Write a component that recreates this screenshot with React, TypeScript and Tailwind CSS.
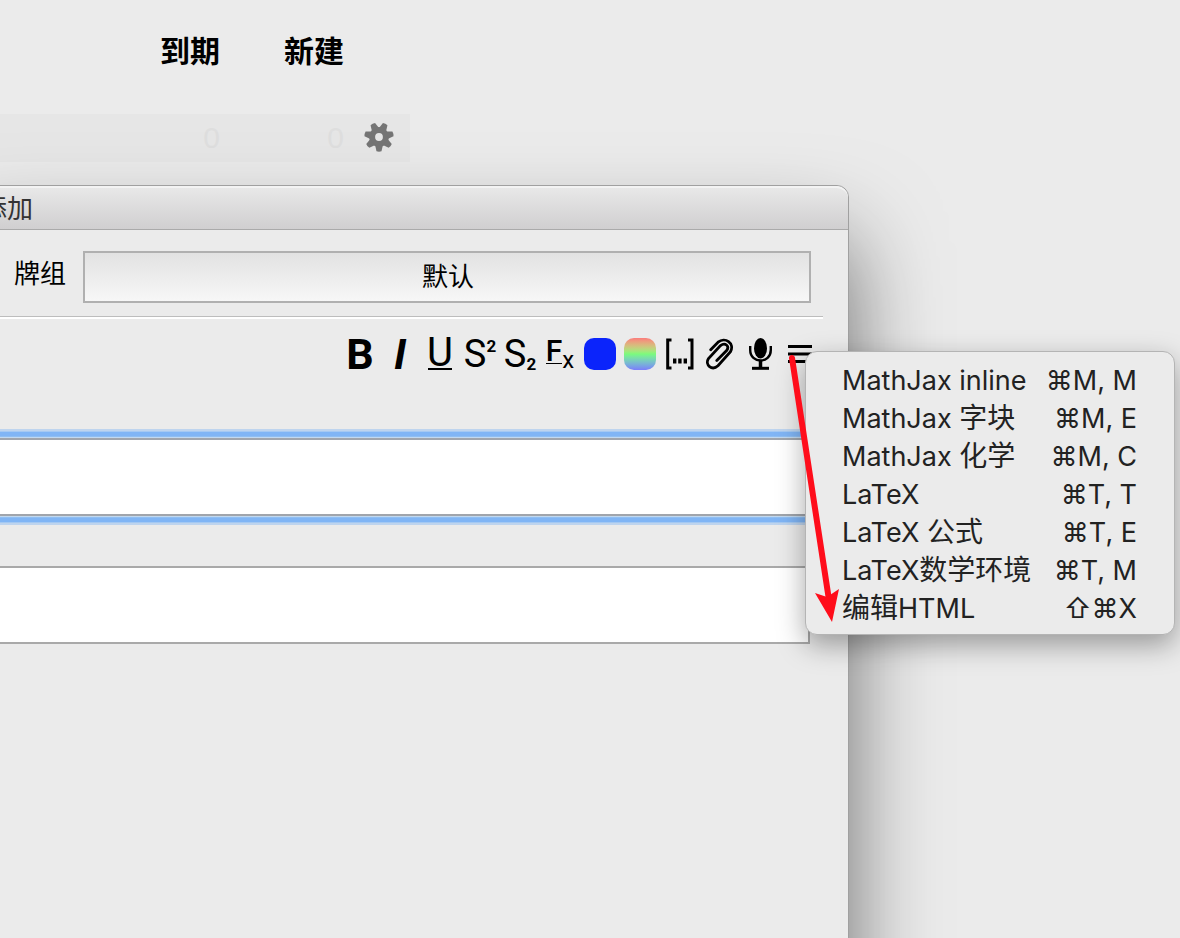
import type { ReactNode } from "react";

const uiFont = "font-['Inter','Noto_Sans_CJK_SC',sans-serif]";
const glyphFont = "font-['Roboto','Liberation_Sans',sans-serif]";

const menuItems = [
  { label: "MathJax inline", keys: "⌘M, M" },
  { label: "MathJax 字块", keys: "⌘M, E" },
  { label: "MathJax 化学", keys: "⌘M, C" },
  { label: "LaTeX", keys: "⌘T, T" },
  { label: "LaTeX 公式", keys: "⌘T, E" },
  { label: "LaTeX数学环境", keys: "⌘T, M" },
  { label: "编辑HTML", keys: "⇧⌘X" },
];

const teeth = [0, 1, 2, 3, 4, 5, 6];

function GearIcon() {
  return (
    <svg width="30" height="30" viewBox="-15 -15 30 30" fill="#757575">
      <circle r="6.9" fill="none" stroke="#757575" strokeWidth="6" />
      {teeth.map((n) => (
        <path key={n} d="M-3.9 8L-2.5 14.3Q0 15.2 2.5 14.3L3.9 8Z" transform={`rotate(${(n * 360) / 7})`} />
      ))}
    </svg>
  );
}

function ToolButton({ title, children }: { title: string; children: ReactNode }) {
  return (
    <button type="button" aria-label={title} className="flex h-10 w-10 shrink-0 items-center justify-center">
      {children}
    </button>
  );
}

function Toolbar() {
  return (
    <div className={`flex justify-end text-black ${glyphFont}`}>
      <ToolButton title="Bold">
        <span className="text-[43px] leading-10 font-bold">B</span>
      </ToolButton>
      <ToolButton title="Italic">
        <span className="text-[43px] leading-10 font-bold italic">I</span>
      </ToolButton>
      <ToolButton title="Underline">
        <span className="flex h-8 w-6 items-center justify-center border-b-2 border-black text-[40px]">U</span>
      </ToolButton>
      <ToolButton title="Superscript">
        <span className="flex text-[38px] leading-10">
          S<sup className="top-0 text-[17px] leading-6 font-bold">2</sup>
        </span>
      </ToolButton>
      <ToolButton title="Subscript">
        <span className="flex items-end text-[38px] leading-10">
          S<sub className="bottom-0 text-[17px] leading-5 font-bold">2</sub>
        </span>
      </ToolButton>
      <ToolButton title="Remove formatting">
        <span className="flex h-8 items-end">
          <span className="mb-1.5 border-b border-black text-[30px] leading-[25px] font-medium">F</span>
          <span className="text-[24px] leading-5">x</span>
        </span>
      </ToolButton>
      <ToolButton title="Text colour">
        <span className="h-8 w-8 rounded-[10px] bg-[#0b24fb]" />
      </ToolButton>
      <ToolButton title="Change colour">
        <span className="h-8 w-8 rounded-[10px] bg-linear-to-b from-[#fb7c7c] via-[#7bfb7c] to-[#7b7cfb]" />
      </ToolButton>
      <ToolButton title="Cloze">
        <svg width="32" height="32" viewBox="0 0 32 32" fill="none" stroke="#000" strokeWidth="3">
          <path d="M7.5 2H3.7V30H7.5M24 2H28V30H24" />
          <path d="M9 23h3.4M14.2 23h3.4M19.6 23h3.4" strokeWidth="5" />
        </svg>
      </ToolButton>
      <ToolButton title="Attach">
        <svg width="32" height="32" viewBox="0 0 32 32" fill="none" stroke="#000" strokeWidth="2.8" strokeLinecap="round">
          <path d="M6.7 11.8L14 4.2C21-1.5 31 5 26.5 13.7L14 27.8C8 33 .5 27 4.5 20.5L16.5 7.6C21 4 26 8 22.6 12.6L12.8 22.4" />
        </svg>
      </ToolButton>
      <ToolButton title="Record audio">
        <svg width="32" height="32" viewBox="0 0 32 32" fill="none" stroke="#000" strokeWidth="2.4">
          <ellipse cx="16.5" cy="10.2" rx="6.5" ry="10.2" fill="#000" stroke="none" />
          <path d="M6.2 8V12C6.2 26 26.8 26 26.8 12V8" />
          <path d="M16.5 22V30" strokeWidth="3.5" />
          <path d="M8 30.3H25" strokeWidth="3" />
        </svg>
      </ToolButton>
      <div className="relative">
        <ToolButton title="More">
          <svg width="24" height="32" viewBox="0 0 24 32" stroke="#000" strokeWidth="3">
            <path d="M0 8.5H24M0 16H24M0 23.5H24" />
          </svg>
        </ToolButton>
        <MoreMenu />
        <svg className="pointer-events-none absolute top-5 left-1" width="60" height="270" viewBox="0 0 60 270">
          <path d="M8 4L45 246" stroke="#ff0d1b" strokeWidth="6" strokeLinecap="round" />
          <path d="M31 239L43 243L55 235L48 268Z" fill="#ff0d1b" />
        </svg>
      </div>
    </div>
  );
}

function MoreMenu() {
  return (
    <div
      role="menu"
      className={`absolute top-[17px] left-[25px] w-[370px] rounded-xl border border-[#b4b4b4] bg-[#ebebeb] pt-[9px] pb-[7px] shadow-[0_10px_28px_rgba(0,0,0,0.35)] ${uiFont}`}
    >
      {menuItems.map((item) => (
        <button
          key={item.label}
          type="button"
          role="menuitem"
          className="flex h-[38px] w-full justify-between pr-[37px] pl-9 text-[28px] leading-[38px] whitespace-nowrap text-[#222]"
        >
          <span>
            {item.label.split(/([\u4e00-\u9fff]+)/).map((part, i) => (
              // odd parts are the Chinese runs, set a little larger than the Latin
              <span key={i} className={i % 2 ? "" : "text-[27px]"}>
                {part}
              </span>
            ))}
          </span>
          <span>
            <span className="text-[27px]">{item.keys}</span>
          </span>
        </button>
      ))}
    </div>
  );
}

function DeckTable() {
  return (
    <table className="w-[410px] table-fixed text-right text-[30px]">
      <thead>
        <tr className="h-[114px] align-top text-black">
          <th className="w-[220px] p-0 pt-[29px] text-right font-bold">到期</th>
          <th className="w-[124px] p-0 pt-[29px] text-right font-bold">新建</th>
          <th className="p-0" />
        </tr>
      </thead>
      <tbody>
        <tr className="h-12 bg-black/2 font-['Liberation_Sans',sans-serif] text-[#dedede]">
          <td className="p-0 leading-10">0</td>
          <td className="p-0 leading-10">0</td>
          <td className="p-0 pb-0.5 pl-5">
            <button type="button" aria-label="选项" className="block">
              <GearIcon />
            </button>
          </td>
        </tr>
      </tbody>
    </table>
  );
}

export default function App() {
  return (
    <main className={`flex h-screen flex-col overflow-hidden bg-[#ebebeb] ${uiFont}`}>
      <div className="shrink-0">
        <DeckTable />
      </div>

      <section className="mt-[23px] mr-[331px] -mb-24 -ml-10 flex-1 rounded-t-xl border border-[#a0a0a0] bg-[#ebebeb] shadow-[0_55px_90px_rgba(0,0,0,0.55)]">
        <header className="flex h-11 items-center rounded-t-xl border-t-2 border-b border-t-[#f3f3f3] border-b-[#aaa] bg-linear-to-b from-[#e8e8e8] to-[#d0cfd0] pl-5">
          <h1 className="text-[26px] text-[#333]">添加</h1>
        </header>

        <div className="pr-[25px] pl-[53px]">
          <div className="flex items-center gap-[17px] pt-[21px] pr-3 pb-[13px]">
            <label htmlFor="deck" className="pb-2 text-[26px] text-black">
              牌组
            </label>
            <button
              id="deck"
              type="button"
              className="h-[52px] flex-1 border-2 border-[#b0b0b0] bg-linear-to-b from-[#e2e2e2] to-[#f7f7f7] pb-0.5 pl-0.5 text-[26px] text-black"
            >
              默认
            </button>
          </div>
          <hr className="-ml-14 h-[3px] border-t border-[#bdbdbd] bg-white" />
        </div>

        <div className="pt-[15px] pr-7">
          <Toolbar />
        </div>

        <div className="flex flex-col gap-[50px] pt-16 pr-[38px]">
          <input
            aria-label="正面"
            className="h-[78px] w-full border-2 border-[#a0a5ac] bg-white px-12 shadow-[0_0_0_1px_#c0d8f0,0_0_0_2px_#8fbef2,0_0_0_6px_#80b5f5,0_0_0_7px_#a5c9f2,0_0_0_9px_#bed4ee] outline-none"
          />
          <input aria-label="背面" className="h-[78px] w-full border-2 border-[#a9a9a9] bg-white px-12 outline-none" />
        </div>
      </section>
    </main>
  );
}
